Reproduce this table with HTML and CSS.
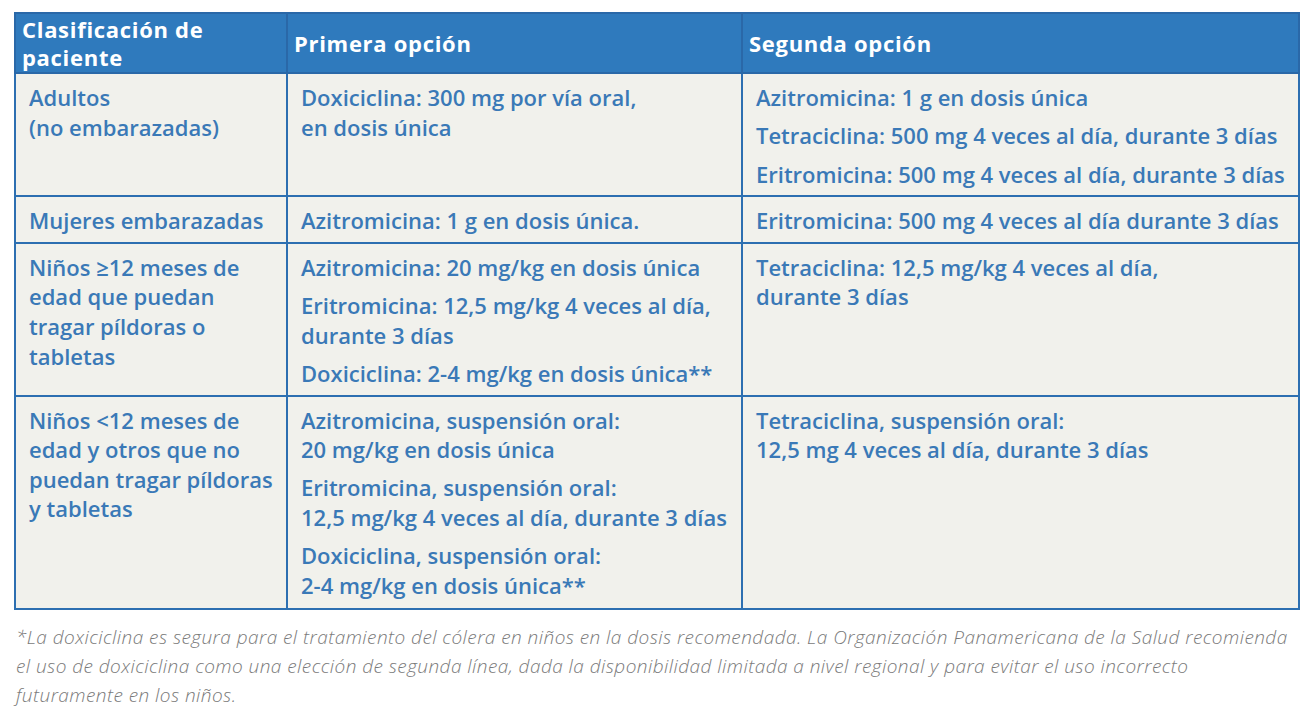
FILE: index.html
```html
<!DOCTYPE html>
<html lang="es">
<head>
<meta charset="utf-8">
<link rel="stylesheet" href="styles.css">
</head>
<body>
<div class="page">
  <table class="dose">
    <colgroup>
      <col class="c1"><col class="c2"><col class="c3">
    </colgroup>
    <thead>
      <tr>
        <th>Clasificación de<br>paciente</th>
        <th>Primera opción</th>
        <th>Segunda opción</th>
      </tr>
    </thead>
    <tbody>
      <tr>
        <td><p>Adultos<br>(no embarazadas)</p></td>
        <td><p>Doxiciclina: 300 mg por vía oral,<br>en dosis única</p></td>
        <td>
          <p>Azitromicina: 1 g en dosis única</p>
          <p>Tetraciclina: 500 mg 4 veces al día, durante 3 días</p>
          <p>Eritromicina: 500 mg 4 veces al día, durante 3 días</p>
        </td>
      </tr>
      <tr>
        <td><p>Mujeres embarazadas</p></td>
        <td><p>Azitromicina: 1 g en dosis única.</p></td>
        <td><p>Eritromicina: 500 mg 4 veces al día durante 3 días</p></td>
      </tr>
      <tr>
        <td><p>Niños ≥12 meses de<br>edad que puedan<br>tragar píldoras o<br>tabletas</p></td>
        <td>
          <p>Azitromicina: 20 mg/kg en dosis única</p>
          <p>Eritromicina: 12,5 mg/kg 4 veces al día,<br>durante 3 días</p>
          <p>Doxiciclina: 2-4 mg/kg en dosis única**</p>
        </td>
        <td><p>Tetraciclina: 12,5 mg/kg 4 veces al día,<br>durante 3 días</p></td>
      </tr>
      <tr class="last">
        <td><p>Niños &lt;12 meses de<br>edad y otros que no<br>puedan tragar píldoras<br>y tabletas</p></td>
        <td>
          <p>Azitromicina, suspensión oral:<br>20 mg/kg en dosis única</p>
          <p>Eritromicina, suspensión oral:<br>12,5 mg/kg 4 veces al día, durante 3 días</p>
          <p>Doxiciclina, suspensión oral:<br>2-4 mg/kg en dosis única**</p>
        </td>
        <td><p>Tetraciclina, suspensión oral:<br>12,5 mg 4 veces al día, durante 3 días</p></td>
      </tr>
    </tbody>
  </table>
  <p class="note">*La doxiciclina es segura para el tratamiento del cólera en niños en la dosis recomendada. La Organización Panamericana de la Salud recomienda<br>el uso de doxiciclina como una elección de segunda línea, dada la disponibilidad limitada a nivel regional y para evitar el uso incorrecto<br>futuramente en los niños.</p>
</div>
</body>
</html>
```

FILE: styles.css
```css
html, body {
  margin: 0;
  padding: 0;
  background: #ffffff;
}

.page {
  padding: 12px 0 0 14px;
  font-family: "Open Sans", "Noto Sans", sans-serif;
}

.dose {
  width: 1284px;
  border-collapse: collapse;
  table-layout: fixed;
  border: 2px solid #2d6fb1;
}

.c1 { width: 272px; }
.c2 { width: 455px; }
.c3 { width: 557px; }

.dose th {
  background: #2f7abd;
  color: #ffffff;
  font-weight: 700;
  font-size: 22px;
  line-height: 28px;
  letter-spacing: 0.7px;
  text-align: left;
  vertical-align: middle;
  padding: 1px 6px;
  height: 56px;
  border: 2px solid #2a68a8;
  white-space: nowrap;
}

.dose td {
  background: #f1f1ec;
  color: #3a79b7;
  font-weight: 600;
  font-size: 22px;
  line-height: 29.6px;
  vertical-align: top;
  padding: 9px 6px 6px 13px;
  border: 2px solid #2d6fb1;
  white-space: nowrap;
}

.dose .last td {
  padding-bottom: 8px;
}

.dose td p {
  margin: 0;
}

.dose td p + p {
  margin-top: 8.7px;
}

.note {
  margin: 13px 0 0 2px;
  font-style: italic;
  font-weight: 300;
  font-size: 19px;
  letter-spacing: 0.45px;
  line-height: 29px;
  color: #7a7a7a;
  white-space: nowrap;
}
```
